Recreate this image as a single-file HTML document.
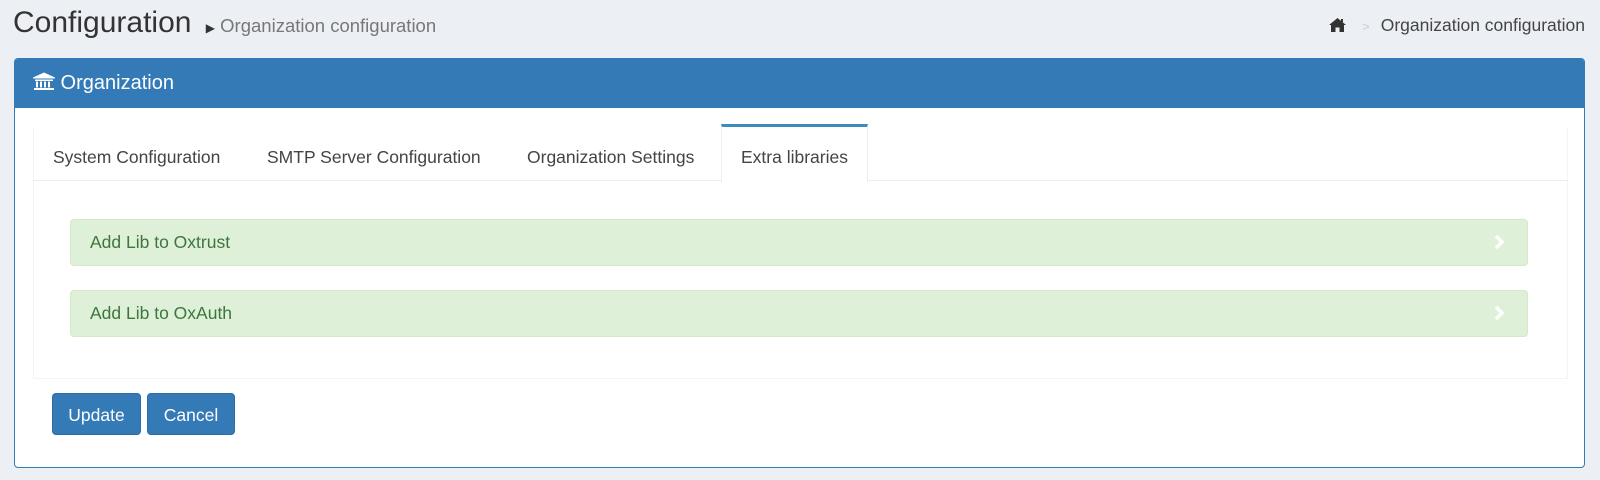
<!DOCTYPE html>
<html><head><style>
*{box-sizing:border-box;margin:0;padding:0}
body{width:1600px;height:480px;background:#ecf0f5;font-family:"Liberation Sans",sans-serif;position:relative;overflow:hidden;color:#333}
.abs{position:absolute}
h1{position:absolute;left:13px;top:6px;font-size:30px;font-weight:normal;color:#333;white-space:nowrap}
h1 small{font-size:18.5px;color:#777;margin-left:6px}
.bc{right:15px;top:15px;font-size:17.5px;color:#444;white-space:nowrap}
.box{left:14px;top:58px;width:1571px;height:410px;border:1px solid #337ab7;border-radius:4px;background:#fff;overflow:hidden}
.hd{left:0;top:0;width:100%;height:49px;background:#337ab7;color:#fff;font-size:20px;padding:13px 0 0 18px}
.tabs{left:18px;top:68px;width:1535px;height:252px;border:1px solid #f4f4f4;border-top:none}
.tabrow{left:18px;top:68px;width:1535px;height:54px;border-bottom:1px solid #eee}
.tab{position:absolute;top:0;height:55px;font-size:17.5px;padding-top:20px;color:#444;white-space:nowrap}
.act{left:688px;top:-3px;width:147px;height:58px;border-top:3px solid #3c8dbc;border-left:1px solid #eee;border-right:1px solid #eee;background:#fff;padding-left:19px;padding-top:20px}
.gp{left:55px;width:1458px;height:47px;background:#dff0d8;border:1px solid #d6e9c6;border-radius:4px;color:#3c763d;font-size:17.5px;padding:12px 0 0 19px}
.gp svg{position:absolute;right:22px;top:15px}
.btn{top:334px;height:42px;background:#337ab7;border:1px solid #2e6da4;border-radius:4px;color:#fff;font-size:17.5px;text-align:center;padding-top:11px}
</style></head><body>
<h1>Configuration <small><span style="font-size:12px;color:#333">&#9654;</span> Organization configuration</small></h1>
<div class="abs bc"><svg width="17" height="14" viewBox="0 0 17 14" style="vertical-align:-1px"><path d="M8.5 0 L17 7 L15 7 L15 14 L10.5 14 L10.5 9.5 L6.5 9.5 L6.5 14 L2 14 L2 7 L0 7 Z" fill="#333"/><rect x="12" y="1" width="2" height="3" fill="#333"/></svg><span style="color:#ccc;margin:0 11px 0 16px;font-size:13px">&gt;</span>Organization configuration</div>
<div class="abs box">
<div class="abs hd"><svg width="22" height="19" viewBox="0 0 22 18" style="vertical-align:-2px"><path d="M11 0 L22 5 L22 6 L0 6 L0 5 Z" fill="#fff"/><rect x="2" y="7" width="18" height="1.5" fill="#fff"/><rect x="3" y="9" width="2" height="6" fill="#fff"/><rect x="7" y="9" width="2" height="6" fill="#fff"/><rect x="11" y="9" width="2" height="6" fill="#fff"/><rect x="15" y="9" width="2" height="6" fill="#fff"/><rect x="1" y="15.5" width="20" height="2" fill="#fff"/></svg> Organization</div>
<div class="abs tabs"></div>
<div class="abs tabrow">
<div class="tab" style="left:20px">System Configuration</div>
<div class="tab" style="left:234px">SMTP Server Configuration</div>
<div class="tab" style="left:494px">Organization Settings</div>
<div class="tab act">Extra libraries</div>
</div>
<div class="abs gp" style="top:160px">Add Lib to Oxtrust<svg width="12" height="14" viewBox="0 0 12 14"><path d="M3 1 L9 7 L3 13" stroke="#fff" stroke-width="3.5" fill="none"/></svg></div>
<div class="abs gp" style="top:231px">Add Lib to OxAuth<svg width="12" height="14" viewBox="0 0 12 14"><path d="M3 1 L9 7 L3 13" stroke="#fff" stroke-width="3.5" fill="none"/></svg></div>
<div class="abs btn" style="left:37px;width:89px">Update</div>
<div class="abs btn" style="left:132px;width:88px">Cancel</div>
</div>
</body></html>
